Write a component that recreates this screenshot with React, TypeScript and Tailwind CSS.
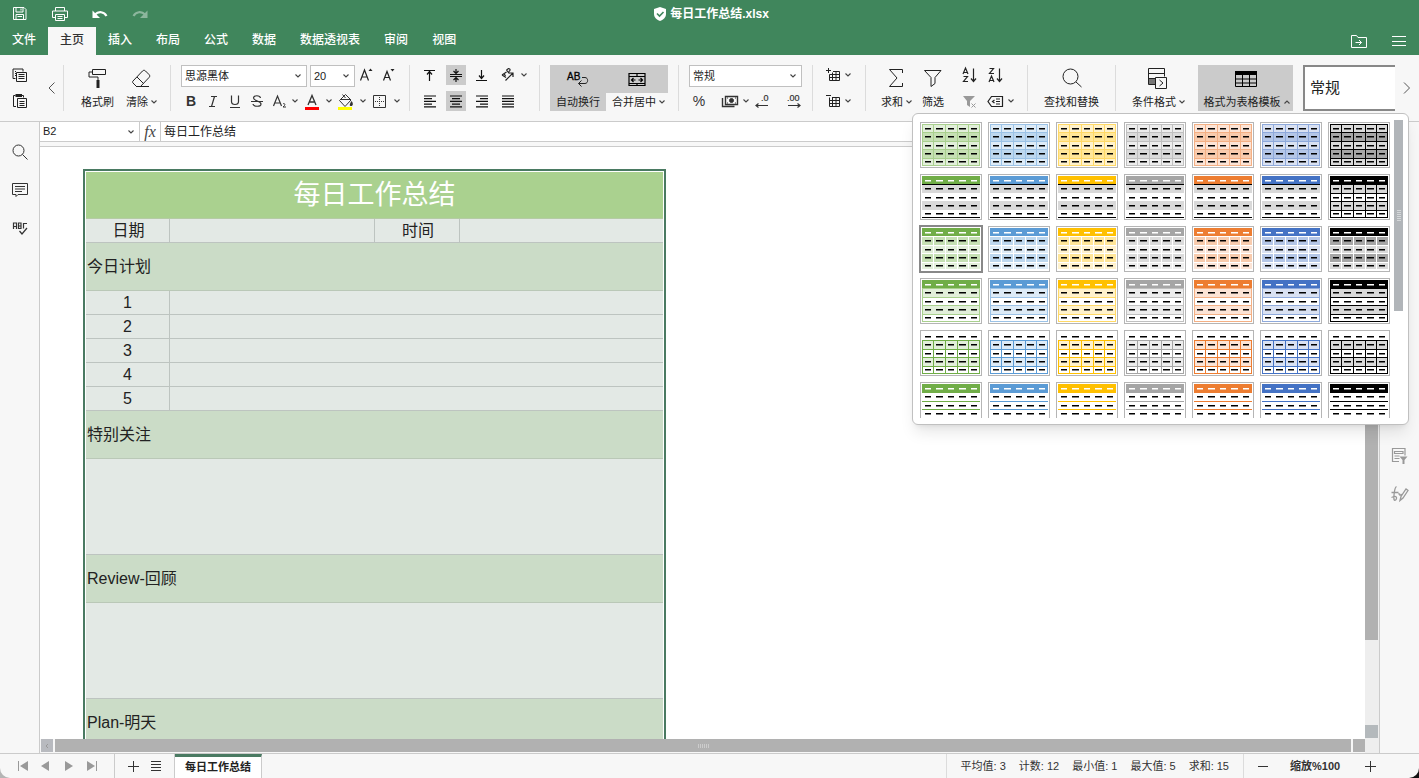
import React, { useState } from 'react';

interface Palette {
	name: string;
	main: string;
	pale: string;
	tint: string;
	line: string;
}

const palettes: Palette[] = [
	{ name: '绿色', main: '#70ad47', pale: '#e2efda', tint: '#c6e0b4', line: '#a9d08e' },
	{ name: '浅蓝', main: '#5b9bd5', pale: '#ddebf7', tint: '#bdd7ee', line: '#9bc2e6' },
	{ name: '金色', main: '#ffc000', pale: '#fff2cc', tint: '#ffe699', line: '#ffd966' },
	{ name: '灰色', main: '#a5a5a5', pale: '#ededed', tint: '#dbdbdb', line: '#c0c0c0' },
	{ name: '橙色', main: '#ed7d31', pale: '#fce4d6', tint: '#f8cbad', line: '#f4b084' },
	{ name: '蓝色', main: '#4472c4', pale: '#d9e1f2', tint: '#b4c6e7', line: '#8ea9db' },
	{ name: '黑色', main: '#000000', pale: '#d9d9d9', tint: '#a6a6a6', line: '#000000' },
];

const ROWS = [1, 9, 18, 26, 35, 43];
const COLS = [12, 24, 36, 47];
const DASH_Y = [5, 13, 22, 30, 38];
const DASHES = [
	[4, 6],
	[15, 7],
	[27, 6],
	[38, 7],
	[50, 6],
];

// Fill of each body row, per template kind
const rowFill = (kind: number, row: number, p: Palette) => {
	const odd = row % 2 === 1;
	if (kind === 0) return odd ? p.tint : p.pale;
	if (row === 0) return kind === 4 ? '#fff' : p.main;
	if (kind === 1) return odd ? '#d9d9d9' : '#fff';
	if (kind === 2) return odd ? p.tint : p.pale;
	if (kind === 3 || kind === 4) return odd ? p.pale : '#fff';
	return '#fff';
};

const TemplatePreview: React.FC<{ kind: number; palette: Palette }> = ({ kind, palette: p }) => {
	const black = p.main === '#000000';
	const firstLine = kind === 0 ? 0 : 1;
	const hasGrid = kind === 0 || kind === 2 || kind === 4 || (kind === 1 && black);
	const hasFrame = kind === 0 || kind === 3 || kind === 4 || (kind === 1 && black);
	let stroke = p.main;
	if (kind === 0 || kind === 3) stroke = p.line;
	if (kind === 1) stroke = '#000';
	if (kind === 2) stroke = '#fff';
	const lines = kind === 1 && !black ? [9, 42] : ROWS.slice(firstLine, 5).concat(42);
	const top = ROWS[firstLine];

	return (
		<svg width="60" height="44" viewBox="0 0 60 44" aria-hidden="true">
			{DASH_Y.map((_, i) => (
				<rect key={i} x="1" y={ROWS[i]} width="58" height={ROWS[i + 1] - ROWS[i]} fill={rowFill(kind, i, p)} />
			))}
			{lines.map((y) => (
				<rect key={y} x="1" y={y} width="58" height="1" fill={stroke} />
			))}
			{hasGrid && COLS.map((x) => (
				<rect key={x} x={x} y={top} width="1" height={43 - top} fill={stroke} />
			))}
			{hasFrame && (
				<>
					<rect x="1" y={top} width="1" height={43 - top} fill={stroke} />
					<rect x="58" y={top} width="1" height={43 - top} fill={stroke} />
				</>
			)}
			{DASH_Y.map((y, i) =>
				DASHES.map(([x, w]) => (
					<rect key={`${x}-${y}`} x={x} y={y} width={w} height="1.5" fill={i === 0 && kind !== 0 && kind !== 4 ? '#fff' : '#000'} />
				))
			)}
		</svg>
	);
};

interface IconProps {
	w?: number;
	h?: number;
	children: React.ReactNode;
}

const Icon: React.FC<IconProps> = ({ w = 20, h = 20, children }) => (
	<svg width={w} height={h} viewBox={`0 0 ${w} ${h}`} fill="none" stroke="currentColor" className="shrink-0" aria-hidden="true">
		{children}
	</svg>
);

const Caret: React.FC<{ up?: boolean }> = ({ up = false }) => (
	<svg width="8" height="6" viewBox="0 0 8 6" fill="none" stroke="#444" strokeWidth="1.1" className="shrink-0" aria-hidden="true">
		<path d={up ? 'M1.5 4.5 4 2l2.5 2.5' : 'M1.5 1.5 4 4l2.5-2.5'} />
	</svg>
);

interface ToolProps {
	label: string;
	active?: boolean;
	menu?: boolean;
	children: React.ReactNode;
}

// Small square toolbar button
const Tool: React.FC<ToolProps> = ({ label, active, menu, children }) => (
	<button aria-label={label} title={label} className="flex h-5 items-center shrink-0">
		<span className={`flex h-5 w-5 items-center justify-center ${active ? 'bg-[#cbcbcb]' : ''}`}>{children}</span>
		{menu && <span className="flex w-3 justify-center"><Caret /></span>}
	</button>
);

// Tall toolbar button with its caption below
const BigTool: React.FC<ToolProps> = ({ label, menu, children }) => (
	<button className="flex h-[46px] shrink-0 flex-col items-center justify-between">
		<span className="flex h-[26px] items-center">{children}</span>
		<span className="flex h-[18px] items-center gap-0.5 whitespace-nowrap">
			{label}
			{menu && <Caret />}
		</span>
	</button>
);

interface DropProps {
	label: string;
	options: string[];
	className: string;
}

const Drop: React.FC<DropProps> = ({ label, options, className }) => (
	<span className={`relative flex shrink-0 items-center ${className}`}>
		<select aria-label={label} className="h-full w-full appearance-none bg-transparent pl-[3px] outline-none">
			{options.map((o) => <option key={o}>{o}</option>)}
		</select>
		<span className="pointer-events-none absolute right-1"><Caret /></span>
	</span>
);

const AlignLines: React.FC<{ d: string }> = ({ d }) => (
	<Icon><path d={d} stroke="#111" strokeWidth="1.2" /></Icon>
);

const tabs = ['文件', '主页', '插入', '布局', '公式', '数据', '数据透视表', '审阅', '视图'];

const Header: React.FC = () => {
	const [active, setActive] = useState('主页');

	return (
		<header className="bg-[#40865c] text-white">
			<div className="grid h-[27px] grid-cols-[1fr_auto_1fr] items-center">
				<div className="flex items-center">
					<button aria-label="保存" className="flex w-10 justify-center">
						<Icon w={16} h={16}>
							<path d="M1.5 1.5h10.500l2 2v10h-12.500zM4 1.5v4.500h7v-4.500M9 2.500v2M4 13.500v-5h7.500v5M5.500 10.500h4.500" />
						</Icon>
					</button>
					<button aria-label="打印" className="flex w-10 justify-center">
						<Icon w={18} h={16}>
							<path d="M4.500 5v-3.500h9v3.500M4.500 11.500h-3v-6.500h15v6.500h-3M4.500 8.500h9v6h-9zM6.500 10.500h5M6.500 12.500h5" />
						</Icon>
					</button>
					<button aria-label="撤消" className="flex w-10 justify-center">
						<Icon w={16} h={12}>
							<path d="M3 6.500c3.500-3.500 9-3 11.500 1.500" strokeWidth="2.200" />
							<path d="M.5 2.500v7.500h7.500z" fill="currentColor" stroke="none" />
						</Icon>
					</button>
					<button aria-label="恢复" className="flex w-10 justify-center opacity-40">
						<Icon w={16} h={12}>
							<path d="M13 6.500c-3.500-3.500-9-3-11.500 1.500" strokeWidth="2.200" />
							<path d="M15.500 2.500v7.500h-7.500z" fill="currentColor" stroke="none" />
						</Icon>
					</button>
				</div>
				<h1 className="flex items-center gap-1 pl-1 text-xs font-bold">
					<Icon w={12} h={14}>
						<path d="M6 0l6 2v5c0 3.500-3 6-6 7-3-1-6-3.500-6-7v-5z" fill="currentColor" stroke="none" />
						<path d="M3 6.500l2.500 2.500 4-4" stroke="#40865c" strokeWidth="1.600" />
					</Icon>
					每日工作总结.xlsx
				</h1>
			</div>
			<div className="flex h-7 items-stretch">
				<nav className="flex">
					{tabs.map((tab) => (
						<button
							key={tab}
							onClick={() => setActive(tab)}
							className={`px-3 pb-0.5 text-xs font-medium ${active === tab ? 'bg-[#f7f7f7] text-[#333]' : ''}`}
						>
							{tab}
						</button>
					))}
				</nav>
				<div className="ml-auto flex items-center">
					<button aria-label="打开文件位置" className="flex w-10 justify-center">
						<Icon w={18} h={14}>
							<path d="M1.500 1.500h5l1.500 2h8.500v10h-15zM5.500 8.500h6M9 6l2.500 2.500-2.500 2.500" />
						</Icon>
					</button>
					<button aria-label="菜单" className="flex w-10 justify-center">
						<Icon w={14} h={12}><path d="M0 1.500h14M0 6.500h14M0 10.500h14" /></Icon>
					</button>
				</div>
			</div>
		</header>
	);
};

const Toolbar: React.FC = () => (
	<div className="flex shrink-0 items-start border-b border-[#cbcbcb] bg-[#f7f7f7] py-2.5 text-[11px] leading-4">
		<div className="flex h-[46px] w-16 shrink-0 items-center border-r border-[#dcdcdc]">
			<div className="flex w-10 flex-col items-center gap-1.5">
				<Tool label="复制">
					<Icon>
						<path d="M5.500 13.500h-2.500v-9.500h10v2.500M5 6.500h1M5 8.500h1M5 10.500h1" />
						<path d="M6.500 7.500h10v9h-10zM8.500 9.500h6M8.500 11.500h6M8.500 13.500h6" />
					</Icon>
				</Tool>
				<Tool label="粘贴">
					<Icon>
						<path d="M6 15.500h-2.500v-11h2M12 4.500h1.500v2" />
						<path d="M5.500 3h6.500v3h-6.500z" fill="currentColor" stroke="none" />
						<path d="M7.500 7.500h9v9h-9zM9.500 10.500h5M9.500 12.500h5M9.500 14.500h5" />
					</Icon>
				</Tool>
			</div>
			<button aria-label="向左滚动" className="flex w-6 justify-center text-[#555]">
				<Icon w={8} h={14}><path d="M7.500 1.500l-5.500 5.500 5.500 5.500" /></Icon>
			</button>
		</div>

		<div className="flex h-[46px] w-[107px] shrink-0 gap-3 border-r border-[#dcdcdc] pl-[17px]">
			<BigTool label="格式刷">
				<Icon>
					<path d="M4.500 1.500h13v5h-13zM4.500 4h-3.500v5h9v3" />
					<path d="M8.500 12h3v8h-3z" fill="currentColor" stroke="none" />
				</Icon>
			</BigTool>
			<BigTool label="清除" menu>
				<Icon>
					<path d="M1 13l9.500-10c1-1 2-1 3 0l3.500 3.500c1 1 1 2 0 3l-8.500 9h-4l-3.500-3.500c-.6-.6-.6-1.400 0-2zM5 9l6.500 6.500M4 18.500h13" />
				</Icon>
			</BigTool>
		</div>

		<div className="flex h-[46px] w-[239px] shrink-0 flex-col justify-between border-r border-[#dcdcdc] pl-2.5">
			<div className="flex h-[22px] items-start">
				<Drop label="字体" options={['思源黑体']} className="h-[22px] w-[126px] border border-[#c0c0c0] bg-white" />
				<Drop label="字号" options={['20', '16', '12']} className="ml-[3px] mr-0.5 h-[22px] w-[45px] border border-[#c0c0c0] bg-white" />
				<div className="flex gap-[3px]">
					<Tool label="增大字号">
						<Icon>
							<path d="M3.500 15.500l4-10.500 4 10.500M5 12h5.500" strokeWidth="1.2" />
							<path d="M11.500 6l2-2.500 2 2.500z" fill="currentColor" stroke="none" />
						</Icon>
					</Tool>
					<Tool label="减小字号">
						<Icon>
							<path d="M3.500 15.500l3.500-9 3.500 9M5 12.500h4.500" strokeWidth="1.2" />
							<path d="M10.500 4l2 2.500 2-2.500z" fill="currentColor" stroke="none" />
						</Icon>
					</Tool>
				</div>
			</div>
			<div className="flex h-5 gap-0.5 text-sm text-[#333]">
				<Tool label="加粗"><b>B</b></Tool>
				<Tool label="倾斜">
					<Icon><path d="M8 5.500h6M6 15.500h6M11.500 5.500l-3 10" strokeWidth="1.2" /></Icon>
				</Tool>
				<Tool label="下划线">
					<Icon><path d="M6.500 4.500v6c0 4 7 4 7 0v-6M5 16.500h10" strokeWidth="1.2" /></Icon>
				</Tool>
				<Tool label="删除线">
					<Icon><path d="M13.500 7c-.5-3-7-3-7 0 0 3 7.500 3 7.500 6s-7.500 3-8 0M4 10.500h12" strokeWidth="1.2" /></Icon>
				</Tool>
				<Tool label="下标" menu>
					<Icon>
						<path d="M4.500 15l4-10 4 10M6 12h5.500" strokeWidth="1.2" />
						<path d="M14 13c1-1.200 2.500 0 1.500 1.500l-1.500 1.500h3" />
					</Icon>
				</Tool>
				<Tool label="字体颜色" menu>
					<Icon>
						<path d="M5 14l4-9.500 4 9.500M6.500 11h5" strokeWidth="1.300" />
						<path d="M2 16h14v3h-14z" fill="#ff0000" stroke="none" />
					</Icon>
				</Tool>
				<Tool label="填充颜色" menu>
					<Icon>
						<path d="M2.500 9.500l6-6 5.500 5.500-6 6.500zM5.500 3.500l3 3.500M4 8.500h9.500" />
						<path d="M14.500 10c2.500 3 1 5-.5 5s-2-1 .5-5z" fill="currentColor" stroke="none" />
						<path d="M1 16h14v3h-14z" fill="#ffff00" stroke="none" />
					</Icon>
				</Tool>
				<Tool label="边框" menu>
					<Icon>
						<path d="M2.500 4.500h12v12h-12z" />
						<path d="M8.500 6v9M4 10.500h9" strokeDasharray="1 1" />
					</Icon>
				</Tool>
			</div>
		</div>

		<div className="flex h-[46px] w-[130px] shrink-0 flex-col justify-between border-r border-[#dcdcdc] pl-2.5">
			<div className="flex gap-1.5">
				<Tool label="顶端对齐"><AlignLines d="M4 5.500h11M9.500 16v-9M7 9.500l2.500-3 2.500 3" /></Tool>
				<Tool label="垂直居中" active><AlignLines d="M4 9.500h12M4 11.500h12M10 4v4.500M10 17v-4.500M7.500 6l2.500 2.500 2.500-2.500M7.500 15l2.500-2.500 2.500 2.500" /></Tool>
				<Tool label="底端对齐"><AlignLines d="M4 15.500h11M9.500 5v8M7 10.500l2.500 3 2.500-3" /></Tool>
				<Tool label="文字方向" menu>
					<Icon>
						<path d="M7.500 15.500l7-7M11 8h4v4M4 10l4.500-3M4 10l4 2.500M6 8.500l1.500 2.500M8.500 5l2-1.500c2 0 2 2 .5 3M8.500 5l3 3.500" strokeWidth="1.2" />
					</Icon>
				</Tool>
			</div>
			<div className="flex gap-1.5">
				<Tool label="左对齐"><AlignLines d="M4 5h12M4 7.700h8M4 10.400h12M4 13.100h8M4 15.800h12" /></Tool>
				<Tool label="居中" active><AlignLines d="M4 5h12M6 7.700h8M4 10.400h12M6 13.100h8M4 15.800h12" /></Tool>
				<Tool label="右对齐"><AlignLines d="M4 5h12M8 7.700h8M4 10.400h12M8 13.100h8M4 15.800h12" /></Tool>
				<Tool label="两端对齐"><AlignLines d="M4 5h12M4 7.700h12M4 10.400h12M4 13.100h12M4 15.800h12" /></Tool>
			</div>
		</div>

		<div className="flex h-[46px] w-[139px] shrink-0 border-r border-[#dcdcdc] pl-2.5">
			<button className="flex h-[46px] w-14 flex-col items-center bg-[#cbcbcb]">
				<span className="flex h-7 items-center">
					<Icon w={24} h={16}>
						<text x="1" y="9" fontSize="10" fill="#000" stroke="#000" strokeWidth=".3">AB</text>
						<path d="M16 6.500h3c3.500 0 3.500 6 0 6h-6.500M15.500 9.500l-3 3 3 3" />
					</Icon>
				</span>
				<span className="flex h-[18px] items-center">自动换行</span>
			</button>
			<button className="flex h-[46px] w-[62px] flex-col items-center">
				<span className="flex h-7 w-full items-center justify-center bg-[#cbcbcb]">
					<Icon w={18} h={15}>
						<path d="M1 1.500h16v12h-16zM1 4.500h16M1 11.500h16M9 1.500v3M9 11.500v2M3.500 8h4M10.500 8h4M5.500 6l-2 2 2 2M12.500 6l2 2-2 2" stroke="#000" strokeWidth="1.200" />
					</Icon>
				</span>
				<span className="flex h-[18px] items-center gap-0.5 pl-1">合并居中<Caret /></span>
			</button>
		</div>

		<div className="flex h-[46px] w-[134px] shrink-0 flex-col justify-between border-r border-[#dcdcdc] px-2.5">
			<Drop label="数字格式" options={['常规', '数值', '货币']} className="h-[22px] w-[113px] border border-[#c0c0c0] bg-white" />
			<div className="flex text-sm text-[#333]">
				<Tool label="百分比样式">%</Tool>
				<div className="ml-[11px] mr-3 flex">
					<Tool label="会计样式" menu>
						<Icon>
							<path d="M5.500 5.500h12v8h-12zM2.500 7v8.500h12" strokeWidth="1.400" />
							<circle cx="11.500" cy="9.500" r="2" fill="currentColor" />
							<path d="M7 7h1M15 7h1M7 12h1M15 12h1" />
						</Icon>
					</Tool>
					<Tool label="减少小数位数">
						<Icon>
							<text x="9" y="10" fontSize="9" fill="currentColor" stroke="currentColor" strokeWidth=".2">.0</text>
							<path d="M4 14.500h12M6.500 12.500l-2.500 2 2.500 2" strokeWidth="1.2" />
						</Icon>
					</Tool>
				</div>
				<Tool label="增加小数位数">
					<Icon>
						<text x="3" y="10" fontSize="9" fill="currentColor" stroke="currentColor" strokeWidth=".2">.00</text>
						<path d="M4 14.500h12M13.500 12.500l2.500 2-2.500 2" strokeWidth="1.2" />
					</Icon>
				</Tool>
			</div>
		</div>

		<div className="flex h-[46px] w-[53px] shrink-0 flex-col justify-between border-r border-[#dcdcdc] pl-[9px]">
			<Tool label="插入单元格" menu>
				<Icon><path d="M4 5.500h5M6.500 3v5M11 6.500h6.500v9h-10v-6M7.500 9.500h10M7.500 12.500h10M10.500 7.500v8M14 6.500v9" /></Icon>
			</Tool>
			<Tool label="删除单元格" menu>
				<Icon><path d="M4 4.500h5M10 6.500h7.500v9h-10v-9M7.500 9.500h10M7.500 12.500h10M10.500 6.500v9M14 6.500v9" /></Icon>
			</Tool>
		</div>

		<div className="flex h-[46px] w-[162px] shrink-0 border-r border-[#dcdcdc] pl-[15px]">
			<BigTool label="求和" menu>
				<Icon><path d="M15.500 5v-3.500h-13l7.500 8.500-7.500 8.500h13v-3.500" /></Icon>
			</BigTool>
			<div className="ml-[9px] mr-[15px]">
				<BigTool label="筛选">
					<Icon><path d="M1.500 2.500h16.500l-6 7v6l-4 3v-9z" /></Icon>
				</BigTool>
			</div>
			<div className="flex flex-col justify-between">
				<div className="flex gap-1.5">
					<Tool label="升序">
						<Icon>
							<path d="M4 9l2.500-6 2.500 6M5 7.500h3M4.500 11.500h4l-4 5h4.500M14.500 3.500v13M12 13.500l2.500 3 2.500-3" strokeWidth="1.2" />
						</Icon>
					</Tool>
					<Tool label="降序">
						<Icon>
							<path d="M4.500 3.500h4l-4 5h4.500M4 17l2.500-6 2.500 6M5 15.500h3M14.500 3.500v13M12 13.500l2.500 3 2.500-3" strokeWidth="1.2" />
						</Icon>
					</Tool>
				</div>
				<div className="flex gap-1.5">
					<Tool label="清除筛选">
						<Icon>
							<path d="M4 5h12l-5 5v6l-3-2v-4z" fill="#999" stroke="none" />
							<path d="M12.500 12.500l4 4M16.500 12.500l-4 4" stroke="#999" />
						</Icon>
					</Tool>
					<Tool label="命名范围" menu>
						<Icon><path d="M6.500 5.500h11v10h-11l-3.500-5zM11 8h4M11 10.500h4M11 13h4M9.500 9l-2 1.500 2 1.500" strokeWidth="1.2" /></Icon>
					</Tool>
				</div>
			</div>
		</div>

		<div className="flex h-[46px] w-[88px] shrink-0 justify-center border-r border-[#dcdcdc]">
			<BigTool label="查找和替换">
				<Icon>
					<circle cx="8.500" cy="8.500" r="7.500" />
					<path d="M14 14l5.500 5" />
				</Icon>
			</BigTool>
		</div>

		<div className="flex h-[46px] min-w-0 flex-1 pl-4">
			<BigTool label="条件格式" menu>
				<Icon w={22} h={22}>
					<path d="M1 12h7v5h-7z" fill="#777" stroke="none" />
					<path d="M7 17.500h-6.500v-16h16v8M.5 6.500h16M.5 11.500h7" />
					<path d="M7.500 10.500h11v11h-11z" />
					<path d="M11.500 13l3.500 3-3.500 3" />
				</Icon>
			</BigTool>
			<button aria-expanded="true" className="ml-3 flex h-[46px] w-[95px] shrink-0 flex-col items-center bg-[#cbcbcb]">
				<span className="flex h-7 items-center">
					<Icon w={22} h={16}>
						<path d="M0 0h22v4h-22z" fill="#000" stroke="none" />
						<path d="M.5 .5h21v15h-21zM0 8h22M0 12h22M7.500 4v12M14.500 4v12" stroke="#000" />
					</Icon>
				</span>
				<span className="flex h-[18px] items-center gap-0.5 whitespace-nowrap pl-[3px]">格式为表格模板<Caret up /></span>
			</button>
			<button className="ml-2.5 h-[46px] min-w-0 flex-1 border-2 border-r-0 border-[#888] bg-white pl-[5px] text-left text-[15px]">
				常规
			</button>
			<button aria-label="向右滚动" className="flex h-[46px] w-6 shrink-0 items-center justify-center text-[#555]">
				<Icon w={8} h={14}><path d="M1 1.500l5.500 5.500-5.500 5.500" /></Icon>
			</button>
		</div>
	</div>
);

const TemplateMenu: React.FC = () => {
	const [selected, setSelected] = useState('2-0');

	return (
		<div className="absolute right-2.5 top-[113px] z-10 flex h-[312px] w-[497px] rounded-md border border-[#c0c0c0] bg-white pb-1.5 pl-[7px] pt-1.5 shadow-lg">
			<div className="-ml-1 grid grid-cols-[repeat(7,62px)] content-start gap-1.5 overflow-hidden pl-1 pt-0.5">
				{[0, 1, 2, 3, 4, 5].map((kind) =>
					palettes.map((palette, i) => {
						const id = `${kind}-${i}`;
						return (
							<button
								key={id}
								aria-label={`表格样式 ${palette.name} ${kind + 1}`}
								onClick={() => setSelected(id)}
								className={`h-[46px] w-[62px] border ${
									selected === id ? 'border-[#888] outline-1 outline-[#888]' : 'border-[#b5b5b5]'
								}`}
							>
								<TemplatePreview kind={kind} palette={palette} />
							</button>
						);
					})
				)}
			</div>
			<div className="ml-1 flex h-[191px] w-[9px] flex-col items-center justify-center gap-px bg-[#b1b5b9]">
				{[0, 1, 2, 3, 4, 5].map((i) => <span key={i} className="h-px w-1 bg-[#d5d8da]" />)}
			</div>
		</div>
	);
};

const lightCell = 'border-b border-[#bdc4c0] bg-[#e3e9e5]';
const sectionCell = 'h-12 border-b border-[#bac8b7] bg-[#cbdcc7] text-left font-normal px-px';

const Sheet: React.FC = () => (
	<div className="min-h-0 min-w-0 flex-1 overflow-hidden bg-white pl-[43px] pt-[22px]">
		<div className="w-[583px] border-2 border-[#4a7a62] p-px">
			<table className="w-full table-fixed border-separate border-spacing-0 text-base leading-5 text-[#222]">
				<colgroup>
					<col className="w-[84px]" />
					<col className="w-[205px]" />
					<col className="w-[85px]" />
					<col />
				</colgroup>
				<tbody>
					<tr>
						<th colSpan={4} className="h-[47px] border-b border-[#b5cba5] bg-[#aad18f] p-0 text-[27px] font-normal text-white">
							每日工作总结
						</th>
					</tr>
					<tr className="h-6">
						<th className={`${lightCell} border-r p-0 pl-0.5 font-normal`}>日期</th>
						<td className={`${lightCell} border-r p-0`} />
						<th className={`${lightCell} border-r p-0 pl-0.5 font-normal`}>时间</th>
						<td className={`${lightCell} p-0`} />
					</tr>
					<tr><th colSpan={4} className={sectionCell}>今日计划</th></tr>
					{[1, 2, 3, 4, 5].map((n) => (
						<tr key={n} className="h-6">
							<th className={`${lightCell} border-r p-0 font-normal`}>{n}</th>
							<td colSpan={3} className={`${lightCell} p-0`} />
						</tr>
					))}
					<tr><th colSpan={4} className={sectionCell}>特别关注</th></tr>
					<tr><td colSpan={4} className={`${lightCell} h-24`} /></tr>
					<tr><th colSpan={4} className={sectionCell}>Review-回顾</th></tr>
					<tr><td colSpan={4} className={`${lightCell} h-24`} /></tr>
					<tr><th colSpan={4} className={sectionCell}>Plan-明天</th></tr>
					<tr><td colSpan={4} className={`${lightCell} h-24`} /></tr>
				</tbody>
			</table>
		</div>
	</div>
);

const StatusBar: React.FC = () => (
	<footer className="shrink-0 bg-linear-to-r from-[#b5b5b5] to-[#111]">
		<div className="flex h-[25px] items-stretch rounded-b-[10px] border-t border-[#cbcbcb] bg-[#f7f7f7] text-[11px] text-[#333]">
			<div className="flex w-[115px] items-center justify-center gap-[7px] border-r border-[#cbcbcb] text-[#999]">
				<button aria-label="第一张"><Icon w={16} h={12}><path d="M3.500 1v10" /><path d="M13 1v10l-8-5z" fill="currentColor" stroke="none" /></Icon></button>
				<button aria-label="上一张"><Icon w={16} h={12}><path d="M11 1v10l-8-5z" fill="currentColor" stroke="none" /></Icon></button>
				<button aria-label="下一张"><Icon w={16} h={12}><path d="M4 1v10l8-5z" fill="currentColor" stroke="none" /></Icon></button>
				<button aria-label="最后一张"><Icon w={16} h={12}><path d="M12.500 1v10" /><path d="M3 1v10l8-5z" fill="currentColor" stroke="none" /></Icon></button>
			</div>
			<div className="flex w-[60px] items-center gap-[11px] border-r border-[#cbcbcb] pl-3">
				<button aria-label="添加工作表"><Icon w={12} h={12}><path d="M6.500 1v11M1 6.500h11" /></Icon></button>
				<button aria-label="工作表列表"><Icon w={12} h={12}><path d="M1 1.500h10M1 4.500h10M1 7.500h10M1 10.500h10" /></Icon></button>
			</div>
			<button className="w-[87px] border-r border-t-[3px] border-r-[#cbcbcb] border-t-[#4a7a62] bg-white font-bold text-[#222]">每日工作总结</button>
			<div className="ml-auto flex items-center gap-[13px] border-l border-[#dcdcdc] px-3.5">
				<span>平均值: 3</span>
				<span>计数: 12</span>
				<span>最小值: 1</span>
				<span>最大值: 5</span>
				<span>求和: 15</span>
			</div>
			<div className="flex w-44 items-center border-l border-[#dcdcdc] pl-[13px]">
				<button aria-label="缩小"><Icon w={12} h={12}><path d="M1 6.500h10" /></Icon></button>
				<span className="ml-[21px] font-bold">缩放%100</span>
				<button aria-label="放大" className="ml-6"><Icon w={12} h={12}><path d="M6.500 1v11M1 6.500h11" /></Icon></button>
			</div>
		</div>
	</footer>
);

const App: React.FC = () => (
	<div className='relative flex h-screen flex-col overflow-hidden bg-[#f7f7f7] font-["Liberation_Sans","Noto_Sans_CJK_SC",sans-serif] text-[#222]'>
		<Header />
		<Toolbar />
		<TemplateMenu />
		<div className="flex min-h-0 flex-1">
			<aside className="flex w-10 shrink-0 flex-col items-center gap-[18px] border-r border-[#cbcbcb] pt-5 text-[#333]">
				<Tool label="查找">
					<Icon><circle cx="8.500" cy="8.500" r="5.500" /><path d="M12.500 12.500l5 5" /></Icon>
				</Tool>
				<Tool label="批注">
					<Icon><path d="M2.500 3.500h15v11h-9.500l-2 2v-2h-3.500zM5 6.500h10M5 9h10M5 11.500h7" /></Icon>
				</Tool>
				<Tool label="拼写检查">
					<Icon>
						<path d="M3.500 11v-6h3v6M3.500 8.500h3M8.500 10.500v-5.500h2.500v5.500zM8.500 8h2.500M17 5.500h-3.500v5M9.500 13l2.500 3 5-6" strokeWidth="1.200" />
					</Icon>
				</Tool>
			</aside>

			<main className="flex min-w-0 flex-1 flex-col">
				<div className="flex h-5 shrink-0 items-stretch border-b border-[#cbcbcb] bg-white text-xs">
					<Drop label="名称框" options={['B2']} className="w-[100px] border-r border-[#cbcbcb] text-[11px]" />
					<button aria-label="插入函数" className='w-[21px] border-r border-[#cbcbcb] font-["Liberation_Serif",serif] text-base leading-4 italic text-[#444]'>fx</button>
					<input aria-label="编辑栏" defaultValue="每日工作总结" className="min-w-0 flex-1 px-[3px] outline-none" />
				</div>
				<div className="h-[5px] shrink-0 border-b border-[#cbcbcb]" />
				<div className="flex min-h-0 flex-1">
					<div className="flex min-w-0 flex-1 flex-col">
						<Sheet />
						<div className="flex h-3.5 shrink-0 gap-0.5 pb-px pl-px text-[#999]">
							<span className="flex w-3 items-center justify-center bg-[#b8babf]">
								<Icon w={6} h={6}><path d="M4 1l-2 2 2 2" /></Icon>
							</span>
							<span className="flex flex-1 items-center justify-center gap-px bg-[#b1b1b1]">
								{[0, 1, 2, 3, 4, 5].map((i) => <span key={i} className="h-1 w-px bg-[#ccc]" />)}
							</span>
							<span className="w-3 bg-[#b1b1b1]" />
						</div>
					</div>
					<div className="flex w-3.5 shrink-0 flex-col bg-[#eee] pr-px">
						<span className="h-[493px] bg-[#b1b1b1]" />
						<span className="mb-[15px] mt-auto h-[13px] bg-[#b4b9bc]" />
					</div>
				</div>
			</main>

			<aside className="flex w-10 shrink-0 flex-col items-center gap-[18px] border-l border-[#cbcbcb] pt-[324px] text-[#999]">
				<Tool label="切片器设置">
					<Icon>
						<path d="M9 15.500h-6.500v-13h12.500v7M4.500 5.500h8.500v2h-8.500zM4.500 10h5M4.500 12.500h5" strokeWidth="1.200" />
						<path d="M9.500 10.500h8l-3 3.500v4h-2v-4z" fill="currentColor" stroke="none" />
					</Icon>
				</Tool>
				<Tool label="签名设置">
					<Icon>
						<path d="M1.500 8.500h7M6.500 2.500c-2 1-3 10-2.500 13 .5 2 3 0 2.500-2s-3-1-5 0M9 9c0 2 1 3 2.500 1M10 16.500l1-4 5-7.500 2 1.500-5 7.500z" strokeWidth="1.300" />
					</Icon>
				</Tool>
			</aside>
		</div>
		<StatusBar />
	</div>
);

export default App;
